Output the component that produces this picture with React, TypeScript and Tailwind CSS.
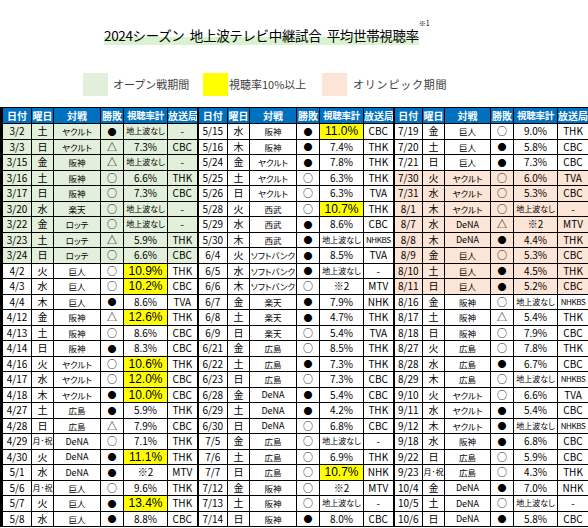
import React from 'react';

type Mark = 'g' | 'p' | '';
type Game = [string, string, string, string, string, string, Mark?];

const col1: Game[] = [
  ['3/2', '土', 'ヤクルト', '●', '地上波なし', '-', 'g'],
  ['3/3', '日', 'ヤクルト', '△', '7.3%', 'CBC', 'g'],
  ['3/15', '金', '阪神', '△', '地上波なし', '-', 'g'],
  ['3/16', '土', '阪神', '○', '6.6%', 'THK', 'g'],
  ['3/17', '日', '阪神', '○', '7.3%', 'CBC', 'g'],
  ['3/20', '水', '楽天', '○', '地上波なし', '-', 'g'],
  ['3/22', '金', 'ロッテ', '○', '地上波なし', '-', 'g'],
  ['3/23', '土', 'ロッテ', '△', '5.9%', 'THK', 'g'],
  ['3/24', '日', 'ロッテ', '○', '6.6%', 'CBC', 'g'],
  ['4/2', '火', '巨人', '○', '10.9%', 'THK'],
  ['4/3', '水', '巨人', '○', '10.2%', 'CBC'],
  ['4/4', '木', '巨人', '●', '8.6%', 'TVA'],
  ['4/12', '金', '阪神', '△', '12.6%', 'THK'],
  ['4/13', '土', '阪神', '○', '8.6%', 'CBC'],
  ['4/14', '日', '阪神', '●', '8.3%', 'CBC'],
  ['4/16', '火', 'ヤクルト', '○', '10.6%', 'THK'],
  ['4/17', '水', 'ヤクルト', '○', '12.0%', 'CBC'],
  ['4/18', '木', 'ヤクルト', '●', '10.0%', 'CBC'],
  ['4/27', '土', '広島', '●', '5.9%', 'THK'],
  ['4/28', '日', '広島', '△', '7.9%', 'CBC'],
  ['4/29', '月･祝', 'DeNA', '○', '7.1%', 'THK'],
  ['4/30', '火', 'DeNA', '●', '11.1%', 'THK'],
  ['5/1', '水', 'DeNA', '●', '※2', 'MTV'],
  ['5/6', '月･祝', '巨人', '○', '9.6%', 'THK'],
  ['5/7', '火', '巨人', '●', '13.4%', 'THK'],
  ['5/8', '水', '巨人', '●', '8.8%', 'CBC'],
];

const col2: Game[] = [
  ['5/15', '水', '阪神', '●', '11.0%', 'CBC'],
  ['5/16', '木', '阪神', '●', '7.4%', 'THK'],
  ['5/24', '金', 'ヤクルト', '●', '7.8%', 'THK'],
  ['5/25', '土', 'ヤクルト', '○', '6.3%', 'THK'],
  ['5/26', '日', 'ヤクルト', '○', '6.3%', 'TVA'],
  ['5/28', '火', '西武', '○', '10.7%', 'THK'],
  ['5/29', '水', '西武', '●', '8.6%', 'CBC'],
  ['5/30', '木', '西武', '●', '地上波なし', 'NHKBS'],
  ['6/4', '火', 'ソフトバンク', '●', '8.5%', 'TVA'],
  ['6/5', '水', 'ソフトバンク', '●', '地上波なし', '-'],
  ['6/6', '木', 'ソフトバンク', '○', '※2', 'MTV'],
  ['6/7', '金', '楽天', '●', '7.9%', 'NHK'],
  ['6/8', '土', '楽天', '●', '4.7%', 'THK'],
  ['6/9', '日', '楽天', '○', '5.4%', 'TVA'],
  ['6/21', '金', '広島', '○', '8.5%', 'THK'],
  ['6/22', '土', '広島', '●', '7.3%', 'THK'],
  ['6/23', '日', '広島', '○', '7.3%', 'CBC'],
  ['6/28', '金', 'DeNA', '●', '5.4%', 'CBC'],
  ['6/29', '土', 'DeNA', '●', '4.2%', 'THK'],
  ['6/30', '日', 'DeNA', '○', '6.8%', 'CBC'],
  ['7/5', '金', '広島', '○', '地上波なし', '-'],
  ['7/6', '土', '広島', '○', '6.9%', 'THK'],
  ['7/7', '日', '広島', '○', '10.7%', 'NHK'],
  ['7/12', '金', '阪神', '○', '※2', 'MTV'],
  ['7/13', '土', '阪神', '○', '地上波なし', '-'],
  ['7/14', '日', '阪神', '●', '8.0%', 'CBC'],
];

const col3: Game[] = [
  ['7/19', '金', '巨人', '○', '9.0%', 'THK'],
  ['7/20', '土', '巨人', '●', '5.8%', 'CBC'],
  ['7/21', '日', '巨人', '●', '7.3%', 'CBC'],
  ['7/30', '火', 'ヤクルト', '○', '6.0%', 'TVA', 'p'],
  ['7/31', '水', 'ヤクルト', '○', '5.3%', 'CBC', 'p'],
  ['8/1', '木', 'ヤクルト', '○', '地上波なし', '-', 'p'],
  ['8/7', '水', 'DeNA', '△', '※2', 'MTV', 'p'],
  ['8/8', '木', 'DeNA', '●', '4.4%', 'THK', 'p'],
  ['8/9', '金', '巨人', '○', '5.3%', 'CBC', 'p'],
  ['8/10', '土', '巨人', '●', '4.5%', 'THK', 'p'],
  ['8/11', '日', '巨人', '●', '5.2%', 'CBC', 'p'],
  ['8/16', '金', '阪神', '○', '地上波なし', 'NHKBS'],
  ['8/17', '土', '阪神', '△', '5.4%', 'THK'],
  ['8/18', '日', '阪神', '○', '7.9%', 'CBC'],
  ['8/27', '火', '広島', '○', '7.8%', 'THK'],
  ['8/28', '水', '広島', '●', '6.7%', 'CBC'],
  ['8/29', '木', '広島', '○', '地上波なし', 'NHKBS'],
  ['9/10', '火', 'ヤクルト', '○', '6.6%', 'TVA'],
  ['9/11', '水', 'ヤクルト', '●', '5.4%', 'CBC'],
  ['9/12', '木', 'ヤクルト', '●', '地上波なし', 'NHKBS'],
  ['9/18', '水', '阪神', '●', '6.8%', 'CBC'],
  ['9/22', '日', '広島', '○', '5.9%', 'CBC'],
  ['9/23', '月･祝', '広島', '○', '4.3%', 'THK'],
  ['10/4', '金', 'DeNA', '●', '7.0%', 'NHK'],
  ['10/5', '土', 'DeNA', '○', '地上波なし', '-'],
  ['10/6', '日', 'DeNA', '●', '5.8%', 'CBC'],
];

const headers = ['日付', '曜日', '対戦', '勝敗', '視聴率計', '放送局'];
const groupWidths = [
  [30, 22, 47, 23, 44, 30],
  [30, 22, 47, 23, 44, 30],
  [29, 22, 46, 23, 44, 31],
];

const cell = 'border border-black p-0 text-center align-middle whitespace-nowrap overflow-hidden leading-none';

function GameCells({ game, first }: { game: Game; first: boolean }) {
  const [date, day, opp, res, rate, tv, mark] = game;
  const rowBg = mark === 'g' ? 'bg-[#e2efda]' : mark === 'p' ? 'bg-[#fce4d6]' : 'bg-white';
  const high = rate.endsWith('%') && parseFloat(rate) >= 10;
  const rateBg = high ? 'bg-[#ffff00]' : rowBg;
  let rateText = 'text-[10px]';
  if (high) rateText = "text-[12px] font-['Liberation_Sans',sans-serif]";
  else if (rate === '地上波なし') rateText = 'text-[8px] [font-feature-settings:"palt"]';
  const oppText = opp === 'DeNA' ? 'text-[9px]' : 'text-[8.5px] [font-feature-settings:"palt"]';
  return (
    <>
      <td className={`${cell} ${rowBg} text-[10px] ${first ? 'border-l-[3px]' : 'border-l-2'}`}>{date}</td>
      <td className={`${cell} ${rowBg} ${day.length > 1 ? 'text-[8px] [font-feature-settings:"palt"]' : 'text-[10px]'}`}>{day}</td>
      <td className={`${cell} ${rowBg} ${oppText}`}>{opp}</td>
      <td className={`${cell} ${rowBg} ${res === '●' ? 'text-[9px]' : 'text-[10px]'}`}>{res}</td>
      <td className={`${cell} ${rateBg} ${rateText}`}>{rate}</td>
      <td className={`${cell} ${rowBg} ${tv === 'NHKBS' ? 'text-[8px] tracking-[-0.4px]' : 'text-[10px]'}`}>{tv}</td>
    </>
  );
}

export default function App() {
  return (
    <div className="w-[588px] h-[528px] overflow-hidden bg-white text-black font-['Noto_Sans_CJK_JP','Noto_Sans',sans-serif]">
      {/* Title */}
      <div className="flex pl-[104px] pt-[22px] h-[73px]">
        <div className="relative">
          <span className="text-[13.5px] leading-[20px] tracking-[-0.35px] whitespace-pre bg-[linear-gradient(transparent_62%,#d9f2d0_62%)]">
            2024シーズン  地上波テレビ中継試合  平均世帯視聴率
          </span>
          <span className="absolute -right-[11px] -top-[2px] text-[7px] leading-none">※1</span>
        </div>
      </div>

      {/* Legend */}
      <div className="flex items-center h-[23px] pl-[83px] text-[11px] text-[#404040]">
        <div className="w-[25px] h-[23px] bg-[#e2efda]" />
        <span className="ml-[5px] w-[90px]">オープン戦期間</span>
        <div className="w-[25px] h-[23px] bg-[#ffff00]" />
        <span className="ml-[1px] w-[93px]">視聴率10%以上</span>
        <div className="w-[25px] h-[23px] bg-[#fce4d6]" />
        <span className="ml-[6px] tracking-[0.8px]">オリンピック期間</span>
      </div>

      {/* Table */}
      <table className="mt-[11px] w-[588px] table-fixed border-collapse">
        <colgroup>
          {groupWidths.flat().map((w, i) => (
            <col key={i} style={{ width: w }} />
          ))}
        </colgroup>
        <thead>
          <tr className="h-[16px]">
            {[0, 1, 2].map((g) =>
              headers.map((h, i) => (
                <th
                  key={`${g}-${i}`}
                  className={`${cell} bg-[#0070c0] text-white font-bold ${i === 4 ? 'text-[9.5px] tracking-[-0.3px]' : 'text-[10px]'} ${i === 0 ? (g === 0 ? 'border-l-[3px]' : 'border-l-2') : ''}`}
                >
                  {h}
                </th>
              ))
            )}
          </tr>
        </thead>
        <tbody>
          {col1.map((_, r) => (
            <tr key={r} className="h-[15.5px]">
              <GameCells game={col1[r]} first />
              <GameCells game={col2[r]} first={false} />
              <GameCells game={col3[r]} first={false} />
            </tr>
          ))}
        </tbody>
      </table>
    </div>
  );
}
